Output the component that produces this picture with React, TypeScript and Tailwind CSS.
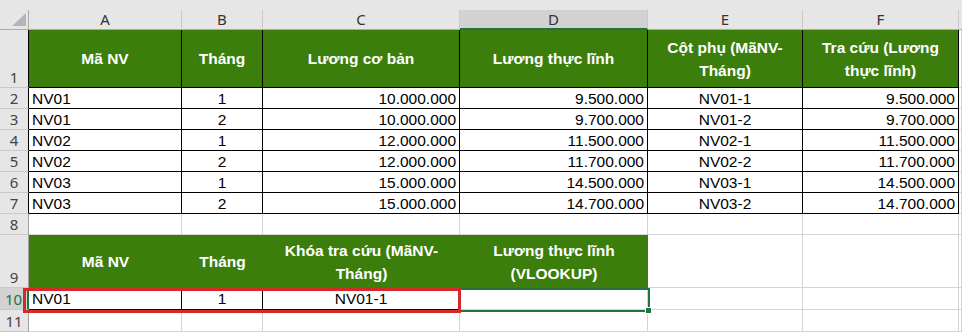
import React from "react";

const GREEN = "bg-[#3b7e0c]";

type CellProps = { children?: React.ReactNode; className?: string };
function Cell({ children, className = "" }: CellProps) {
  return <div className={`flex min-w-0 overflow-hidden ${className}`}>{children}</div>;
}

const colLetters = ["A", "B", "C", "D", "E", "F"];

const dataRows: string[][] = [
  ["NV01", "1", "10.000.000", "9.500.000", "NV01-1", "9.500.000"],
  ["NV01", "2", "10.000.000", "9.700.000", "NV01-2", "9.700.000"],
  ["NV02", "1", "12.000.000", "11.500.000", "NV02-1", "11.500.000"],
  ["NV02", "2", "12.000.000", "11.700.000", "NV02-2", "11.700.000"],
  ["NV03", "1", "15.000.000", "14.500.000", "NV03-1", "14.500.000"],
  ["NV03", "2", "15.000.000", "14.700.000", "NV03-2", "14.700.000"],
];

const align = [
  "justify-start pl-[3px]",
  "justify-center",
  "justify-end pr-[3px]",
  "justify-end pr-[3px]",
  "justify-center",
  "justify-end pr-[3px]",
];

const rowHdr =
  "bg-[#e6e6e6] border-b border-[#c9c9c9] items-end justify-center text-[15px] text-[#444] leading-none pb-[2px] [font-family:'Noto_Sans','Open_Sans',sans-serif]";

const grid = "bg-white border-r border-b border-[#d4d4d4]";
const black = "bg-white border-r border-b border-black items-center text-[15.5px] text-black";
const head1 = `${GREEN} border-r border-b border-black items-center justify-center text-center text-white font-bold text-[15.5px] leading-[23px]`;
const head9 = `${GREEN} items-center justify-center text-center text-white font-bold text-[15.5px] leading-[23px]`;

export default function App() {
  return (
    <div className="relative w-[962px] h-[332px] overflow-hidden bg-white [font-family:'Liberation_Sans',Arial,sans-serif]">
      <div className="grid grid-cols-[29px_153px_81px_197px_188px_155px_156px_3px] grid-rows-[10px_20px_58px_21px_21px_21px_21px_21px_21px_21px_53px_22px_22px]">
        {/* top strip */}
        <div className="col-span-8 bg-[#e6e6e6]" />

        {/* column headers */}
        <Cell className="bg-[#e6e6e6] border-r border-b border-[#ababab] relative">
          <svg className="absolute left-[12px] top-[3px]" width="14" height="13" viewBox="0 0 14 13">
            <polygon points="14,0 14,13 0,13" fill="#b5b5b5" />
          </svg>
        </Cell>
        {colLetters.map((l) => (
          <Cell
            key={l}
            className={`${
              l === "D" ? "bg-[#d2d2d2] border-b-2 border-b-[#217346]" : "bg-[#e6e6e6] border-b border-b-[#ababab]"
            } border-r border-r-[#c9c9c9] items-center justify-center text-[15px] text-[#333] leading-none [font-family:'Noto_Sans','Open_Sans',sans-serif]`}
          >
            {l}
          </Cell>
        ))}
        <Cell className="bg-[#e6e6e6] border-b border-[#ababab]" />

        {/* row 1 */}
        <Cell className={`${rowHdr} border-r border-r-black`}>1</Cell>
        <Cell className={head1}>Mã NV</Cell>
        <Cell className={head1}>Tháng</Cell>
        <Cell className={head1}>Lương cơ bản</Cell>
        <Cell className={head1}>Lương thực lĩnh</Cell>
        <Cell className={head1}>
          <div>
            Cột phụ (MãNV-
            <br />
            Tháng)
          </div>
        </Cell>
        <Cell className={head1}>
          <div>
            Tra cứu (Lương
            <br />
            thực lĩnh)
          </div>
        </Cell>
        <Cell className={grid} />

        {/* rows 2-7 */}
        {dataRows.map((r, i) => (
          <React.Fragment key={i}>
            <Cell className={`${rowHdr} border-r border-r-black`}>{i + 2}</Cell>
            {r.map((v, j) => (
              <Cell key={j} className={`${black} ${align[j]} pt-[1px]`}>
                {v}
              </Cell>
            ))}
            <Cell className={grid} />
          </React.Fragment>
        ))}

        {/* row 8 */}
        <Cell className={`${rowHdr} border-r border-r-[#9f9f9f]`}>8</Cell>
        {Array.from({ length: 7 }).map((_, j) => (
          <Cell key={j} className={grid} />
        ))}

        {/* row 9 */}
        <Cell className={`${rowHdr} border-r border-r-[#9f9f9f]`}>9</Cell>
        <Cell className={head9}>Mã NV</Cell>
        <Cell className={head9}>Tháng</Cell>
        <Cell className={head9}>
          <div>
            Khóa tra cứu (MãNV-
            <br />
            Tháng)
          </div>
        </Cell>
        <Cell className={head9}>
          <div>
            Lương thực lĩnh
            <br />
            (VLOOKUP)
          </div>
        </Cell>
        <Cell className={grid} />
        <Cell className={grid} />
        <Cell className={grid} />

        {/* row 10 */}
        <Cell className="bg-[#d2d2d2] border-b border-[#c9c9c9] border-r-2 border-r-[#217346] items-end justify-center text-[15px] text-[#217346] leading-none pb-[2px] [font-family:'Noto_Sans','Open_Sans',sans-serif]">
          10
        </Cell>
        <Cell className={`${black} ${align[0]} pt-[1px]`}>NV01</Cell>
        <Cell className={`${black} ${align[1]} pt-[1px]`}>1</Cell>
        <Cell className={`${black} justify-center pt-[1px]`}>NV01-1</Cell>
        <Cell className={grid} />
        <Cell className={grid} />
        <Cell className={grid} />
        <Cell className={grid} />

        {/* row 11 */}
        <Cell className={`${rowHdr} border-r border-r-[#9f9f9f]`}>11</Cell>
        {Array.from({ length: 7 }).map((_, j) => (
          <Cell key={j} className={grid} />
        ))}
      </div>

      {/* selected cell D10 */}
      <div className="absolute left-[459px] top-[288px] w-[191px] h-[24px] border-2 border-[#217346]" />
      <div className="absolute left-[645px] top-[307px] w-[7px] h-[7px] bg-[#217346] border border-white" />

      {/* red highlight A10:C10 */}
      <div className="absolute left-[23px] top-[288px] w-[438px] h-[25px] border-[3px] border-[#d42a2a]" />
    </div>
  );
}
